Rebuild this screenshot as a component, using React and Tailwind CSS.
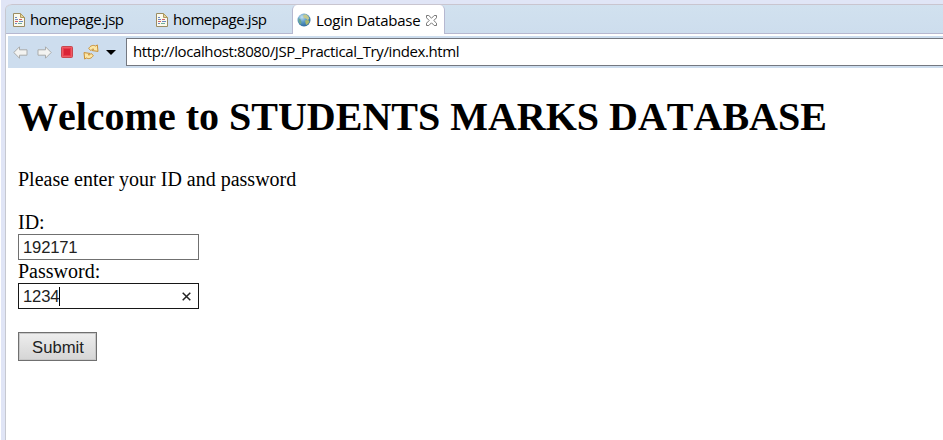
const uiFont = "font-['Open_Sans','Noto_Sans',sans-serif]";

function FileIcon() {
  return (
    <svg className="h-[14px] w-[12px] shrink-0" viewBox="0 0 12 14">
      <path d="M.5.5h7l4 4v9H.5z" fill="#fbf9ec" stroke="#9a8c62" />
      <path d="M7.500.5v4h4z" fill="#e6d49c" stroke="#b09c60" />
      <path d="M2 4.500h2M2 6.500h3M6 8.500h4M2 10.500h2" stroke="#6a88c2" />
      <path d="M6 6.500h3M2 8.500h3" stroke="#d0606c" />
      <path d="M5 10.500h4" stroke="#6fae9c" />
    </svg>
  );
}

function GlobeIcon() {
  return (
    <svg className="h-[14px] w-[14px] shrink-0" viewBox="0 0 14 14">
      <defs>
        <radialGradient id="sea" cx="35%" cy="28%" r="75%">
          <stop offset="0" stopColor="#c5e0f0" />
          <stop offset=".5" stopColor="#5b9bc8" />
          <stop offset="1" stopColor="#2d699c" />
        </radialGradient>
      </defs>
      <circle cx="7" cy="7" r="6.500" fill="url(#sea)" />
      <path d="M6 2 9 1.200l2.500 2.300.8 2.500-2 1-1.300-1.500L7 5z" fill="#c3c98c" />
      <path d="M8 7.500l3-.5 1.500 1.500-1.500 2.500-2 1z" fill="#a9b86c" />
      <path d="M1.500 5 3.500 6.500 4.500 9 4 11.500 1.800 9.500z" fill="#6da68c" />
    </svg>
  );
}

function CloseIcon() {
  return (
    <svg className="h-[11px] w-[11px] shrink-0" viewBox="0 0 11 11">
      <path
        d="M.5.5h2.300l2.700 2.700L8.200.5h2.300v2.300L7.800 5.500l2.700 2.700v2.300H8.200L5.500 7.800l-2.700 2.700H.5V8.200l2.700-2.700L.5 2.800z"
        fill="#fff"
        stroke="#777"
      />
    </svg>
  );
}

function ArrowIcon({ className }) {
  return (
    <svg className={`h-[13px] w-[15px] shrink-0 ${className}`} viewBox="0 0 15 13">
      <path d="M.8 6.500 6.500.8v3H14v5.400H6.500v3z" fill="#f3f3f1" stroke="#a9abab" strokeLinejoin="round" />
    </svg>
  );
}

function SyncIcon() {
  return (
    <svg className="ml-[10px] h-[16px] w-[16px] shrink-0" viewBox="0 0 16 16">
      <g fill="#fbe6a6" stroke="#c98f35" strokeWidth="1" strokeLinejoin="round">
        <path d="M5.800 4.500C7 1.800 10 .6 12.700 2L14.300.9 15 7.400 9.200 6.600l1.500-1.400C9.500 4.900 8.600 5.500 7.800 6.600z" />
        <path d="M10.200 11.500c-1.200 2.700-4.200 3.900-6.900 2.500L1.700 15.100 1 8.600l5.800.8-1.500 1.400c1.200.3 2.100-.3 2.900-1.400z" />
      </g>
    </svg>
  );
}

function TabBar() {
  return (
    <div className={`flex h-[30px] rounded-tl-[6px] border-t border-[#c9c5cf] bg-linear-to-b from-[#d1e1ef] to-[#cddded] text-[15px] text-black ${uiFont}`}>
      <div className="flex w-[286px] items-center border-b border-[#b6b8d0] pl-[7px] pt-px">
        <FileIcon />
        <span className="ml-[5px] w-[126px] whitespace-nowrap tracking-[-0.42px]">homepage.jsp</span>
        <FileIcon />
        <span className="ml-[5px] whitespace-nowrap tracking-[-0.42px]">homepage.jsp</span>
      </div>
      <div className="flex w-[153px] items-center rounded-t-[5px] border-x border-[#b6b8d0] bg-white pl-[4px] pt-px">
        <GlobeIcon />
        <span className="ml-[5px] w-[110px] whitespace-nowrap tracking-[-0.25px]">Login Database</span>
        <CloseIcon />
      </div>
      <div className="flex-1 border-b border-[#b6b8d0]" />
    </div>
  );
}

function Toolbar() {
  return (
    <div className="ml-[2px] mt-[2px] flex h-[32px] items-center bg-[#cdddee] pl-[5px]">
      <ArrowIcon className="" />
      <ArrowIcon className="ml-[9px] -scale-x-100" />
      <svg className="ml-[9px] h-[12px] w-[12px] shrink-0" viewBox="0 0 12 12">
        <rect x=".5" y=".5" width="11" height="11" rx="1" fill="#ee5964" stroke="#c7474e" />
        <rect x="2.500" y="2.500" width="7" height="7" fill="#da2335" stroke="#e83c4a" />
      </svg>
      <SyncIcon />
      <svg className="ml-[7px] h-[5px] w-[10px] shrink-0" viewBox="0 0 10 5">
        <path d="M0 0h10L5 5z" fill="#000" />
      </svg>
      <div className={`ml-[10px] flex h-[28px] flex-1 items-center border border-r-0 border-[#747880] bg-white pb-[2px] pl-[6px] text-[15px] text-black ${uiFont}`}>
        <span className="whitespace-nowrap tracking-[-0.4px]">http://localhost:8080/JSP_Practical_Try/index.html</span>
      </div>
    </div>
  );
}

function LoginPage() {
  return (
    <main className="flex flex-col items-start pl-[12px] font-['Liberation_Serif',serif] text-[20px] leading-[23px] text-black">
      <h1 className="mt-[26px] whitespace-nowrap text-[40px] font-bold leading-[46px] [font-kerning:none]">Welcome to STUDENTS MARKS DATABASE</h1>
      <p className="mt-[28px] whitespace-nowrap">Please enter your ID and password</p>
      <div className="mt-[20px]">ID:</div>
      <div className="flex h-[26px] w-[181px] items-center border border-[#707070] pl-[4px] font-['Liberation_Sans',sans-serif] text-[16.667px] tracking-[-0.2px] text-[#222]">
        192171
      </div>
      <div>Password:</div>
      <div className="flex h-[26px] w-[181px] items-center border border-[#171717] pl-[4px] font-['Liberation_Sans',sans-serif] text-[16.667px] tracking-[-0.2px] text-[#222]">
        <span>1234</span>
        <span className="h-[19px] w-px bg-black" />
        <svg className="ml-auto mr-[7px] h-[9px] w-[9px]" viewBox="0 0 9 9">
          <path d="M.7.7l7.600 7.600M8.300.7.7 8.300" stroke="#222" strokeWidth="1.500" />
        </svg>
      </div>
      <button className="mt-[23px] h-[29px] w-[79px] border border-[#707070] bg-linear-to-b from-[#eee] to-[#d5d5d5] pt-px pl-px font-['Liberation_Sans',sans-serif] text-[16.667px] text-[#222] shadow-[inset_0_0_0_1px_#c8c8c8]">
        Submit
      </button>
    </main>
  );
}

export default function App() {
  return (
    <div className="h-[440px] w-[943px] overflow-hidden border-l border-white bg-[#e0e5f6] pl-[4px] pt-[4px]">
      <div className="h-full rounded-tl-[6px] border-l border-[#c6c8d0] bg-white">
        <TabBar />
        <Toolbar />
        <LoginPage />
      </div>
    </div>
  );
}
